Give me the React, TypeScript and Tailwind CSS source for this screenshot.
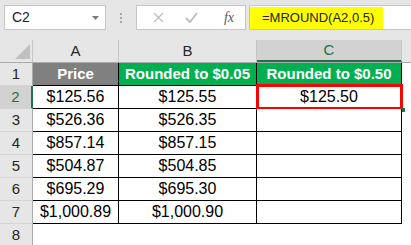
import React from "react";

const rows = [
  ["$125.56", "$125.55", "$125.50"],
  ["$526.36", "$526.35", ""],
  ["$857.14", "$857.15", ""],
  ["$504.87", "$504.85", ""],
  ["$695.29", "$695.30", ""],
  ["$1,000.89", "$1,000.90", ""],
];

const font = { fontFamily: '"Liberation Sans", Arial, sans-serif' };

function RowHead({ n, selected }: { n: number; selected?: boolean }) {
  return (
    <div
      className={`w-[33px] shrink-0 flex items-center justify-center text-[15px] border-b border-[#d4d4d4] ${
        selected
          ? "bg-[#d2d2d2] text-[#217346] border-r-2 border-r-[#217346]"
          : "bg-[#e6e6e6] text-[#262626] border-r border-r-[#ababab]"
      }`}
    >
      {n}
    </div>
  );
}

export default function App() {
  return (
    <div className="w-[411px] h-[245px] bg-[#e6e6e6] overflow-hidden" style={font}>
      {/* formula bar */}
      <div className="h-[40px] flex items-start pt-[5px]">
        <div className="ml-[4px] w-[102px] h-[25px] bg-white border border-[#c6c6c6] flex items-center justify-between pl-[7px] pr-[6px]">
          <span className="text-[14px] text-[#222]">C2</span>
          <svg width="7" height="4" viewBox="0 0 7 4">
            <path d="M0 0h7L3.5 4z" fill="#7a7a7a" />
          </svg>
        </div>
        <div className="w-[30px] h-[25px] flex flex-col items-center justify-center gap-[2px]">
          <div className="w-[2px] h-[2px] bg-[#a6a6a6]" />
          <div className="w-[2px] h-[2px] bg-[#a6a6a6]" />
          <div className="w-[2px] h-[2px] bg-[#a6a6a6]" />
        </div>
        <div className="w-[110px] h-[25px] bg-white border border-[#c6c6c6] flex items-center">
          <div className="w-[42px] flex justify-center">
            <svg width="11" height="11" viewBox="0 0 11 11">
              <path d="M1 1l9 9M10 1l-9 9" stroke="#c0c0c0" strokeWidth="1.4" />
            </svg>
          </div>
          <div className="w-[24px] flex justify-center">
            <svg width="13" height="11" viewBox="0 0 13 11">
              <path d="M1 6l4 4 7-9" stroke="#c0c0c0" strokeWidth="2" fill="none" />
            </svg>
          </div>
          <div className="flex-1 flex justify-center pl-[10px]">
            <span
              className="italic text-[14px] text-[#595959]"
              style={{ fontFamily: '"Liberation Serif", serif' }}
            >
              fx
            </span>
          </div>
        </div>
        <div className="ml-[3px] flex-1 h-[25px] bg-white border-y border-l border-[#c6c6c6] flex items-center">
          <div className="w-[133px] h-[22px] bg-[#ffff00] flex items-center pl-[12px] text-[13px] text-[#222]">
            =MROUND(A2,0.5)
          </div>
        </div>
      </div>

      {/* column headers */}
      <div className="h-[23px] flex border-b border-[#ababab]">
        <div className="w-[33px] shrink-0 border-r border-[#c6c6c6] relative">
          <svg className="absolute left-[15px] top-[4px]" width="15" height="15" viewBox="0 0 15 15">
            <path d="M15 0v15H0z" fill="#c0c0c0" />
          </svg>
        </div>
        <div className="w-[86px] shrink-0 flex items-center justify-center text-[15px] text-[#262626] border-r border-[#c6c6c6]">
          A
        </div>
        <div className="w-[138px] shrink-0 flex items-center justify-center text-[15px] text-[#262626] border-r border-[#c6c6c6]">
          B
        </div>
        <div className="w-[145px] shrink-0 flex items-center justify-center text-[15px] text-[#217346] bg-[#d2d2d2] border-r border-[#c6c6c6] border-b-2 border-b-[#217346]">
          C
        </div>
        <div className="flex-1" />
      </div>

      {/* row 1 */}
      <div className="h-[23px] flex">
        <RowHead n={1} />
        <div className="w-[86px] shrink-0 bg-[#808080] text-white font-bold text-[15px] flex items-center justify-center border-r border-b border-black">
          Price
        </div>
        <div className="w-[138px] shrink-0 bg-[#00b050] text-white font-bold text-[15px] flex items-center justify-center border-r border-b border-black">
          Rounded to $0.05
        </div>
        <div className="w-[145px] shrink-0 bg-[#00b050] text-white font-bold text-[15px] flex items-center justify-center border-r border-b border-black">
          Rounded to $0.50
        </div>
        <div className="flex-1 bg-white" />
      </div>

      {rows.map((r, i) => (
        <div key={i} className="h-[23px] flex">
          <RowHead n={i + 2} selected={i === 0} />
          <div className="w-[86px] shrink-0 bg-white text-[16px] text-black flex items-center justify-center border-r border-b border-black">
            {r[0]}
          </div>
          <div className="w-[138px] shrink-0 bg-white text-[16px] text-black flex items-center justify-center border-r border-b border-black">
            {r[1]}
          </div>
          <div className="w-[145px] shrink-0 bg-white text-[16px] text-black flex items-center justify-center border-r border-b border-black relative">
            {r[2]}
            {i === 0 && (
              <>
                <div className="absolute -left-[1px] -top-[2px] -right-[2px] -bottom-[2px] border-[3px] border-[#ff0000]" />
                <div className="absolute -right-[4px] -bottom-[4px] w-[4px] h-[4px] bg-[#217346]" />
              </>
            )}
          </div>
          <div className="flex-1 bg-white" />
        </div>
      ))}

      <div className="h-[23px] flex">
        <RowHead n={8} />
        <div className="flex-1 bg-white" />
      </div>
    </div>
  );
}
